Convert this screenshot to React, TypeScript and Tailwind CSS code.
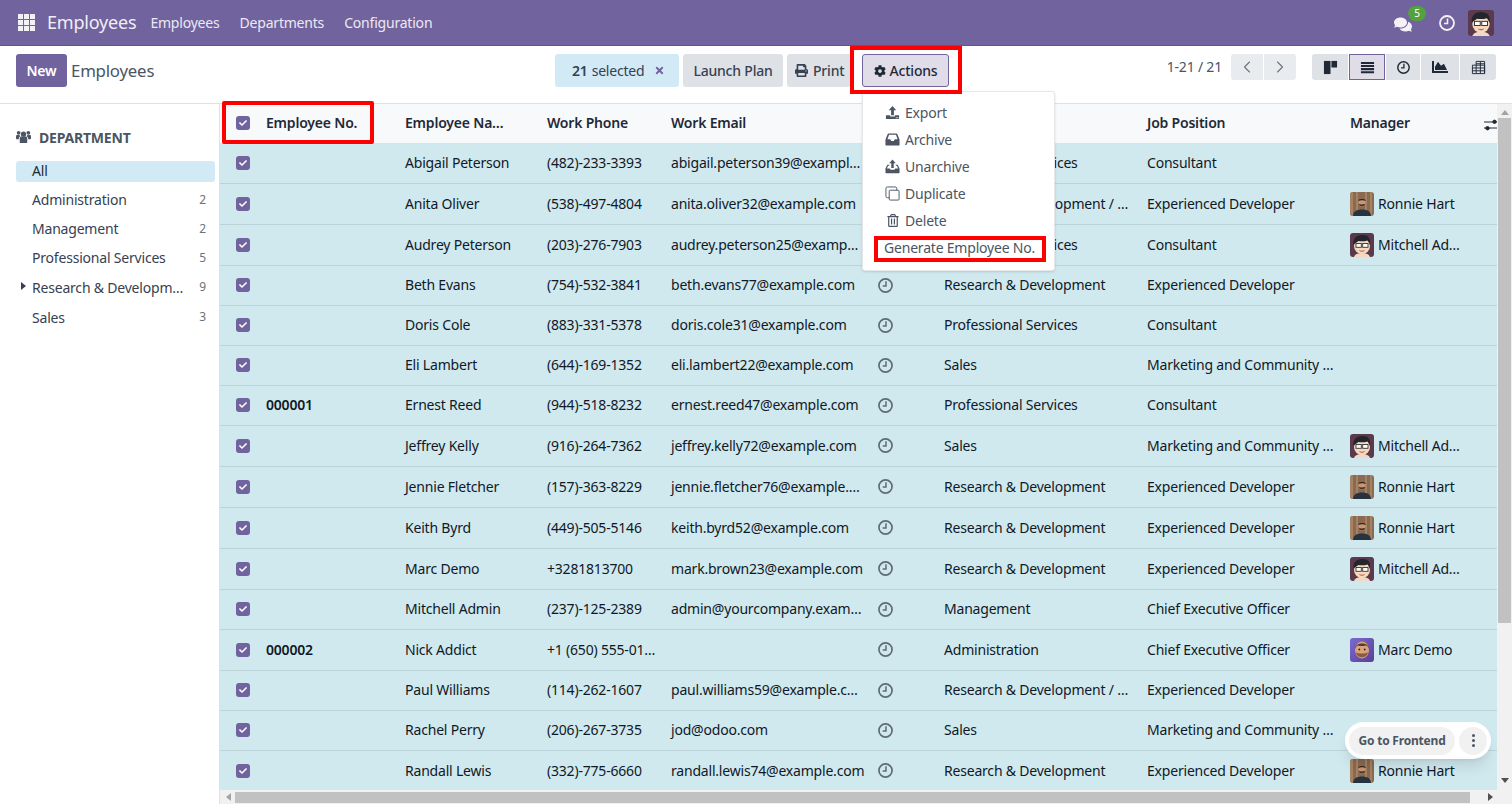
import React from 'react';
import { ChevronLeft, ChevronRight } from 'lucide-react';
import { FaCheck, FaComments, FaCog, FaPrint, FaTimes, FaChartArea, FaRegTrashAlt } from 'react-icons/fa';

type Row = { no?: string; name: string; phone: string; email: string; dept: string; job: string; mgr?: string; h: string };

const rows: Row[] = [
  { name: 'Abigail Peterson', phone: '(482)-233-3393', email: 'abigail.peterson39@exampl…', dept: 'Professional Services', job: 'Consultant', h: 'h-[40px]' },
  { name: 'Anita Oliver', phone: '(538)-497-4804', email: 'anita.oliver32@example.com', dept: 'Research & Development / …', job: 'Experienced Developer', mgr: 'Ronnie Hart', h: 'h-[41px]' },
  { name: 'Audrey Peterson', phone: '(203)-276-7903', email: 'audrey.peterson25@examp…', dept: 'Professional Services', job: 'Consultant', mgr: 'Mitchell Ad…', h: 'h-[41px]' },
  { name: 'Beth Evans', phone: '(754)-532-3841', email: 'beth.evans77@example.com', dept: 'Research & Development', job: 'Experienced Developer', h: 'h-[40px]' },
  { name: 'Doris Cole', phone: '(883)-331-5378', email: 'doris.cole31@example.com', dept: 'Professional Services', job: 'Consultant', h: 'h-[40px]' },
  { name: 'Eli Lambert', phone: '(644)-169-1352', email: 'eli.lambert22@example.com', dept: 'Sales', job: 'Marketing and Community …', h: 'h-[40px]' },
  { no: '000001', name: 'Ernest Reed', phone: '(944)-518-8232', email: 'ernest.reed47@example.com', dept: 'Professional Services', job: 'Consultant', h: 'h-[40px]' },
  { name: 'Jeffrey Kelly', phone: '(916)-264-7362', email: 'jeffrey.kelly72@example.com', dept: 'Sales', job: 'Marketing and Community …', mgr: 'Mitchell Ad…', h: 'h-[41px]' },
  { name: 'Jennie Fletcher', phone: '(157)-363-8229', email: 'jennie.fletcher76@example.…', dept: 'Research & Development', job: 'Experienced Developer', mgr: 'Ronnie Hart', h: 'h-[41px]' },
  { name: 'Keith Byrd', phone: '(449)-505-5146', email: 'keith.byrd52@example.com', dept: 'Research & Development', job: 'Experienced Developer', mgr: 'Ronnie Hart', h: 'h-[41px]' },
  { name: 'Marc Demo', phone: '+3281813700', email: 'mark.brown23@example.com', dept: 'Research & Development', job: 'Experienced Developer', mgr: 'Mitchell Ad…', h: 'h-[41px]' },
  { name: 'Mitchell Admin', phone: '(237)-125-2389', email: 'admin@yourcompany.exam…', dept: 'Management', job: 'Chief Executive Officer', h: 'h-[40px]' },
  { no: '000002', name: 'Nick Addict', phone: '+1 (650) 555-01…', email: '', dept: 'Administration', job: 'Chief Executive Officer', mgr: 'Marc Demo', h: 'h-[41px]' },
  { name: 'Paul Williams', phone: '(114)-262-1607', email: 'paul.williams59@example.c…', dept: 'Research & Development / …', job: 'Experienced Developer', h: 'h-[40px]' },
  { name: 'Rachel Perry', phone: '(206)-267-3735', email: 'jod@odoo.com', dept: 'Sales', job: 'Marketing and Community …', h: 'h-[40px]' },
  { name: 'Randall Lewis', phone: '(332)-775-6660', email: 'randall.lewis74@example.com', dept: 'Research & Development', job: 'Experienced Developer', mgr: 'Ronnie Hart', h: 'h-[41px]' },
];

const departments = [
  { name: 'Administration', n: 2, h: 'h-[29px]' },
  { name: 'Management', n: 2, h: 'h-[29px]' },
  { name: 'Professional Services', n: 5, h: 'h-[29px]' },
  { name: 'Research & Developm…', n: 9, h: 'h-[30px]', caret: true },
  { name: 'Sales', n: 3, h: 'h-[30px]' },
];

const Check = () => (
  <span className="w-[14px] h-[14px] rounded-[3px] bg-[#71639e] flex items-center justify-center">
    <FaCheck className="text-white w-[8px] h-[8px]" />
  </span>
);

// clock with the thick ring odoo uses, the hands go up and to the left
const Clock = ({ className }: { className: string }) => (
  <svg viewBox="0 0 16 16" className={className} fill="none" stroke="currentColor">
    <circle cx="8" cy="8" r="7" strokeWidth="1.8" />
    <path d="M8.500 3.500v5H5" strokeWidth="1.600" />
  </svg>
);

const MitchellAvatar = ({ size }: { size: number }) => (
  <svg width={size} height={size} viewBox="0 0 24 24" className="rounded-[3px] shrink-0">
    <rect width="24" height="24" fill="#5c3a4e" />
    <path d="M4 24c1-3 4-4 8-4s7 1 8 4z" fill="#f3d9c4" />
    <ellipse cx="12" cy="13" rx="8" ry="8" fill="#f6d8bd" />
    <path d="M3.500 12C2.500 5 7 1.500 13 2c5 0 8 3 7 10-1-2-1.500-3.500-2.500-4.500-3 1-7 1-9 .5-1 1-4 2-5 4z" fill="#23262b" />
    <rect x="6" y="10.500" width="5.300" height="3.800" fill="#fff" stroke="#333" strokeWidth=".9" />
    <rect x="12.700" y="10.500" width="5.300" height="3.800" fill="#fff" stroke="#333" strokeWidth=".9" />
    <path d="M9.500 17.500c1.500 1 3.500 1 5 0" stroke="#a0503f" strokeWidth=".9" fill="none" />
  </svg>
);

const RonnieAvatar = () => (
  <svg width="24" height="24" viewBox="0 0 24 24" className="rounded-[3px] shrink-0">
    <rect width="24" height="24" fill="#8a6a50" />
    <path d="M0 0h3v24H0zM6 0h2v24H6zM15 0h2v24h-2zM20 0h2v24h-2z" fill="#a58263" />
    <path d="M3 24c0-4.500 4-6.500 9-6.500s9 2 9 6.500z" fill="#27333f" />
    <ellipse cx="12" cy="10.500" rx="3.600" ry="4.600" fill="#c99676" />
    <path d="M8.200 9C8 5.500 16 5.500 15.800 9c-2-1-5.600-1-7.600 0z" fill="#3a2a20" />
    <path d="M8.600 11.500c.5 4 6.300 4 6.800 0-1 1.200-5.800 1.200-6.800 0z" fill="#4a3426" />
  </svg>
);

const MarcAvatar = () => (
  <svg width="24" height="24" viewBox="0 0 24 24" className="rounded-[3px] shrink-0">
    <defs>
      <linearGradient id="marcbg" x1="0" y1="0" x2="1" y2="1">
        <stop offset="0" stopColor="#7a6bd0" />
        <stop offset="1" stopColor="#5a3f96" />
      </linearGradient>
    </defs>
    <rect width="24" height="24" fill="url(#marcbg)" />
    <ellipse cx="12" cy="12" rx="7" ry="8.500" fill="#d9a37f" />
    <path d="M5 11C4.500 3.500 19.500 3.500 19 11c-1-2.500-2-3.500-3-3.500-3 .8-6 .8-8 0-1 0-2 1-3 3.500z" fill="#5a3a28" />
    <path d="M6 14c1 7 11 7 12 0-1 1-3 1.500-6 1.500S7 15 6 14z" fill="#8a5a3a" />
    <circle cx="9.300" cy="11.500" r=".9" fill="#2a1a14" />
    <circle cx="14.700" cy="11.500" r=".9" fill="#2a1a14" />
  </svg>
);

const ManagerAvatar = ({ name }: { name: string }) => {
  if (name.startsWith('Ronnie')) return <RonnieAvatar />;
  if (name.startsWith('Marc')) return <MarcAvatar />;
  return <MitchellAvatar size={24} />;
};

const ExportIcon = () => (
  <svg viewBox="0 0 16 16" className="w-[15px] h-[15px]" fill="currentColor">
    <path d="M8 1l4 4.500H9.500V11h-3V5.500H4z" />
    <path fillRule="evenodd" d="M1 11h4.500v1.300h5V11H15v4H1zM11.500 13v1h1v-1zM13.200 13v1h1v-1z" />
  </svg>
);

const ArchiveIcon = () => (
  <svg viewBox="0 0 16 16" className="w-[15px] h-[15px]" fill="currentColor">
    <path fillRule="evenodd" d="M4 1.500h8c.6 0 1 .3 1.200.8L15.500 8v5.500a1 1 0 0 1-1 1h-13a1 1 0 0 1-1-1V8l2.300-5.700c.2-.5.6-.8 1.200-.8zM4.300 3L2.600 7.800h3l1 1.700h2.800l1-1.700h3L11.700 3z" />
  </svg>
);

const UnarchiveIcon = () => (
  <svg viewBox="0 0 16 16" className="w-[15px] h-[15px]" fill="currentColor">
    <path d="M8 .5l3.500 4H9.300v5H6.700v-5H4.500z" />
    <path d="M.5 10l2-4h2v1.300H3.300L2 10h3l1 1.500h4L11 10h3l-1.300-2.700h-1.200V6h2l2 4v4.500a.7.7 0 0 1-.7.7H1.200a.7.7 0 0 1-.7-.7z" />
  </svg>
);

const DuplicateIcon = () => (
  <svg viewBox="0 0 16 16" className="w-[15px] h-[15px]" fill="none" stroke="currentColor" strokeWidth="1">
    <rect x="4.500" y="4.500" width="10.500" height="10.500" rx="1" />
    <path d="M4.500 12.500H2.500a1.500 1.500 0 0 1-1.500-1.500V2.500A1.500 1.500 0 0 1 2.500 1h8.500a1.500 1.500 0 0 1 1.500 1.500v2" />
  </svg>
);

const AppsIcon = () => (
  <svg viewBox="0 0 17 17" className="w-[17px] h-[17px]" fill="#f3f1f7">
    <path d="M0 0h5v5H0zM6 0h5v5H6zM12 0h5v5h-5zM0 6h5v5H0zM6 6h5v5H6zM12 6h5v5h-5zM0 12h5v5H0zM6 12h5v5H6zM12 12h5v5h-5z" />
  </svg>
);

const GroupIcon = () => (
  <svg viewBox="0 0 16 15" className="w-[15px] h-[14px]" fill="currentColor">
    <circle cx="8" cy="4.500" r="2.800" />
    <circle cx="2.800" cy="3" r="2" />
    <circle cx="13.200" cy="3" r="2" />
    <path d="M4 9c0-1.500 1-2 2-2h4c1 0 2 .5 2 2v5H4z" />
    <path d="M0 6.500C0 5.500.7 5.300 1.500 5.300h2.300c.2 1 .5 1.300 1 1.700C3.500 7.300 3 8 3 9v1H.8C.3 10 0 9.700 0 9.200zM16 6.500c0-1-.7-1.200-1.500-1.200h-2.300c-.2 1-.5 1.300-1 1.700 1.300.3 1.800 1 1.800 2v1h2.200c.5 0 .8-.3.8-.8z" />
  </svg>
);

const KanbanIcon = () => (
  <svg viewBox="0 0 16 16" className="w-[15px] h-[15px]" fill="currentColor">
    <path d="M1 1h7v14H1z" />
    <path d="M9 1h6v7H9z" />
  </svg>
);

const ListIcon = () => (
  <svg viewBox="0 0 16 16" className="w-[15px] h-[15px]" fill="currentColor">
    <path d="M1 2h14v2.200H1zM1 5.300h14v2.200H1zM1 8.600h14v2.200H1zM1 11.900h14v2.200H1z" />
  </svg>
);

const TableIcon = () => (
  <svg viewBox="0 0 16 16" className="w-[15px] h-[15px]" fill="none" stroke="currentColor" strokeWidth="1">
    <path d="M1.500 5.500h13v9h-13zM5.500 1.500h9v13M1.500 8.500h13M1.500 11.500h13M5.500 1.500v13M10 1.500v13M5.500 4h9" />
  </svg>
);

const SlidersIcon = () => (
  <svg viewBox="0 0 14 14" className="w-[14px] h-[14px]" fill="currentColor" stroke="currentColor">
    <path d="M0 4h14M0 10h14" strokeWidth="1" />
    <circle cx="10.500" cy="3.800" r="1.700" />
    <circle cx="3.500" cy="10.200" r="1.700" />
  </svg>
);

const menuItems = [
  { label: 'Export', icon: <ExportIcon /> },
  { label: 'Archive', icon: <ArchiveIcon /> },
  { label: 'Unarchive', icon: <UnarchiveIcon /> },
  { label: 'Duplicate', icon: <DuplicateIcon /> },
  { label: 'Delete', icon: <FaRegTrashAlt className="w-[12px] h-[13px]" /> },
];

export default function App() {
  return (
    <div className="relative h-[804px] w-[1512px] overflow-hidden bg-white text-[14px] text-[#374151] flex flex-col font-['Noto_Sans','Liberation_Sans',sans-serif] tracking-[-0.2px]">
      {/* navbar */}
      <div className="h-[46px] shrink-0 bg-[#71639e] border-b border-[#5f5387] flex items-center text-white pl-[18px] pr-[18px]">
        <AppsIcon />
        <span className="ml-[12px] text-[18px] text-[#f1eff6]">Employees</span>
        <div className="flex gap-[20px] ml-[14px] text-[#ece9f3]">
          <span>Employees</span>
          <span>Departments</span>
          <span>Configuration</span>
        </div>
        <div className="ml-auto flex items-center">
          <div className="relative mr-[19px]">
            <FaComments className="w-[18px] h-[17px] text-[#f4f2f8] mt-[3px]" />
            <span className="absolute -top-[7px] left-[14px] w-[18px] h-[15px] rounded-full bg-[#53a13f] text-[10px] leading-[15px] text-center">5</span>
          </div>
          <Clock className="w-[16px] h-[16px] text-[#f4f2f8] mr-[13px] ml-[8px]" />
          <MitchellAvatar size={26} />
        </div>
      </div>

      {/* control panel */}
      <div className="h-[58px] shrink-0 border-b border-[#dee2e6] flex items-start pt-[8px] pl-[16px] pr-[16px]">
        <button className="h-[33px] w-[51px] rounded-[3px] bg-[#71639e] text-white font-semibold">New</button>
        <span className="ml-[4px] mt-[4px] text-[16.800px] text-[#4b5563] w-[88px]">Employees</span>
        <div className="flex ml-[396px] gap-[4px]">
          <div className="h-[33px] w-[124px] rounded-[3px] bg-[#d2e9f6] flex items-center pl-[17px] text-[#374151]">
            <b className="font-semibold">21</b>
            <span className="ml-[4px]">selected</span>
            <FaTimes className="ml-[10px] w-[11px] h-[11px] text-[#71639e]" />
          </div>
          <button className="h-[33px] w-[100px] rounded-[3px] bg-[#dee2e6] font-medium text-[#374151]">Launch Plan</button>
          <button className="h-[33px] w-[64px] rounded-[3px] bg-[#dee2e6] font-medium text-[#374151] flex items-center pl-[8px] gap-[5px]">
            <FaPrint className="w-[13px] h-[13px]" />Print
          </button>
          <button className="h-[33px] w-[87px] ml-[7px] rounded-[3px] bg-[#e0dde9] border border-[#71639e] font-medium text-[#1f2937] flex items-center justify-center gap-[4px]">
            <FaCog className="w-[12px] h-[12px]" />Actions
          </button>
        </div>
        <div className="ml-auto flex items-start">
          <span className="text-[#4b5563] mr-[9px] leading-[26px]">1-21 / 21</span>
          <div className="flex gap-[1px] h-[26px]">
            <span className="w-[32px] bg-[#e9ecef] rounded-l-[3px] flex items-center justify-center"><ChevronLeft className="w-[20px] h-[20px] text-[#6b7280]" strokeWidth={1.3} /></span>
            <span className="w-[32px] bg-[#e9ecef] rounded-r-[3px] flex items-center justify-center"><ChevronRight className="w-[20px] h-[20px] text-[#6b7280]" strokeWidth={1.3} /></span>
          </div>
          <div className="flex gap-[1px] h-[26px] ml-[16px] text-[#1f2937]">
            <span className="w-[36px] bg-[#dee2e6] rounded-l-[3px] flex items-center justify-center"><KanbanIcon /></span>
            <span className="w-[36px] bg-[#e0dde9] border border-[#71639e] flex items-center justify-center"><ListIcon /></span>
            <span className="w-[34px] bg-[#dee2e6] flex items-center justify-center"><Clock className="w-[13px] h-[13px]" /></span>
            <span className="w-[38px] bg-[#dee2e6] flex items-center justify-center"><FaChartArea className="w-[16px] h-[16px]" /></span>
            <span className="w-[36px] bg-[#dee2e6] rounded-r-[3px] flex items-center justify-center"><TableIcon /></span>
          </div>
        </div>
      </div>

      <div className="flex flex-1 min-h-0">
        {/* sidebar */}
        <aside className="w-[220px] shrink-0 border-r border-[#dee2e6] pl-[16px] pr-[4px] pt-[25px]">
          <div className="flex items-center gap-[8px] font-bold text-[#4b5563] h-[16px]">
            <GroupIcon />
            <span>DEPARTMENT</span>
          </div>
          <div className="mt-[16px] h-[21px] rounded-[3px] bg-[#d2e9f6] pl-[16px] leading-[20px] text-[#1f2937]">All</div>
          <div className="mt-[3px] flex flex-col">
            {departments.map(d => (
              <div key={d.name} className={`${d.h} relative flex items-center justify-between pl-[16px] pr-[9px] text-[#374151]`}>
                {d.caret && <span className="absolute left-[5px] top-[10px] border-y-[4px] border-y-transparent border-l-[5px] border-l-[#374151]" />}
                <span>{d.name}</span>
                <span className="text-[12px] text-[#6b7280]">{d.n}</span>
              </div>
            ))}
          </div>
        </aside>

        {/* list */}
        <div className="flex-1 min-w-0 flex flex-col">
          <div className="flex flex-1 min-h-0">
            <div className="flex-1 min-w-0 overflow-hidden">
              <table className="w-[1277px] table-fixed border-collapse">
                <colgroup>
                  <col className="w-[38px]" /><col className="w-[139px]" /><col className="w-[142px]" /><col className="w-[124px]" />
                  <col className="w-[207px]" /><col className="w-[66px]" /><col className="w-[203px]" /><col className="w-[203px]" />
                  <col className="w-[130px]" /><col />
                </colgroup>
                <thead>
                  <tr className="h-[39px] bg-[#f8f9fa] border-b border-[#dee2e6] text-left text-[#1f2937]">
                    <th className="pl-[16px]"><Check /></th>
                    <th className="pl-[8px] pb-[2px] font-semibold">Employee No.</th>
                    <th className="pl-[8px] pb-[2px] font-semibold">Employee Na…</th>
                    <th className="pl-[8px] pb-[2px] font-semibold">Work Phone</th>
                    <th className="pl-[8px] pb-[2px] font-semibold">Work Email</th>
                    <th />
                    <th />
                    <th className="pl-[8px] pb-[2px] font-semibold">Job Position</th>
                    <th className="pl-[8px] pb-[2px] font-semibold">Manager</th>
                    <th className="text-right"><span className="inline-block mr-[-1px] align-middle"><SlidersIcon /></span></th>
                  </tr>
                </thead>
                <tbody>
                  {rows.map(r => {
                    // rows with an avatar are a pixel taller and their text sits a pixel lower
                    const pad = r.mgr ? 'pl-[8px]' : 'pl-[8px] pb-[2px]';
                    return (
                      <tr key={r.name} className={`${r.h} bg-[#d0e9ee] border-b border-[#bbd3d9] text-[#111827] whitespace-nowrap`}>
                        <td className="pl-[16px]"><Check /></td>
                        <td className={`${pad} font-semibold`}>{r.no}</td>
                        <td className={pad}>{r.name}</td>
                        <td className={pad}>{r.phone}</td>
                        <td className={pad}>{r.email}</td>
                        <td className="pl-[8px]"><Clock className="w-[15px] h-[15px] text-[#5f6b76]" /></td>
                        <td className={pad}>{r.dept}</td>
                        <td className={pad}>{r.job}</td>
                        <td className="pl-[8px]">
                          {r.mgr && (
                            <span className="flex items-center gap-[4px]">
                              <ManagerAvatar name={r.mgr} />
                              <span>{r.mgr}</span>
                            </span>
                          )}
                        </td>
                        <td />
                      </tr>
                    );
                  })}
                </tbody>
              </table>
            </div>
            {/* vertical scrollbar */}
            <div className="w-[15px] shrink-0 bg-[#f1f1f1] flex flex-col items-center">
              <span className="mt-[6px] border-x-[4px] border-x-transparent border-b-[5px] border-b-[#a3a3a3]" />
              <span className="mt-[3px] w-[13px] h-[505px] bg-[#c1c1c1]" />
              <span className="mt-auto mb-[7px] border-x-[4px] border-x-transparent border-t-[5px] border-t-[#505050]" />
            </div>
          </div>
          {/* horizontal scrollbar */}
          <div className="h-[14px] shrink-0 bg-[#f1f1f1] flex items-center pl-[6px] pr-[19px]">
            <span className="border-y-[4px] border-y-transparent border-r-[5px] border-r-[#a3a3a3]" />
            <span className="ml-[4px] h-[11px] w-[1235px] bg-[#c1c1c1]" />
            <span className="ml-auto border-y-[4px] border-y-transparent border-l-[5px] border-l-[#505050]" />
          </div>
        </div>
      </div>

      {/* actions dropdown */}
      <div className="absolute left-[862px] top-[91px] w-[193px] h-[180px] bg-white border border-[#e5e7eb] rounded-[3px] shadow-sm pt-[7px] text-[#4b5563]">
        {menuItems.map(m => (
          <div key={m.label} className="h-[27px] flex items-center gap-[5px] pl-[22px]">
            <span className="w-[15px] flex justify-center">{m.icon}</span>
            {m.label}
          </div>
        ))}
        <div className="h-[27px] flex items-center pl-[21px]">Generate Employee No.</div>
      </div>

      {/* red annotation boxes */}
      <div className="absolute left-[222px] top-[101px] w-[152px] h-[43px] border-[4px] border-[#ff0000] rounded-[2px]" />
      <div className="absolute left-[850px] top-[46px] w-[112px] h-[48px] border-[4px] border-[#ff0000]" />
      <div className="absolute left-[874px] top-[236px] w-[172px] h-[26px] border-[4px] border-[#ff0000]" />

      {/* frontend pill */}
      <div className="absolute left-[1345px] top-[722px] w-[146px] h-[37px] bg-white rounded-full shadow-lg flex items-center px-[4px] gap-[4px]">
        <span className="h-[28px] w-[106px] rounded-full bg-[#f1f1f1] text-[12px] font-bold text-[#4b5563] flex items-center justify-center">Go to Frontend</span>
        <span className="w-[28px] h-[28px] rounded-full bg-[#f1f1f1] flex flex-col items-center justify-center gap-[2px]">
          <i className="w-[3px] h-[3px] rounded-full bg-[#4b5563]" />
          <i className="w-[3px] h-[3px] rounded-full bg-[#4b5563]" />
          <i className="w-[3px] h-[3px] rounded-full bg-[#4b5563]" />
        </span>
      </div>
    </div>
  );
}
